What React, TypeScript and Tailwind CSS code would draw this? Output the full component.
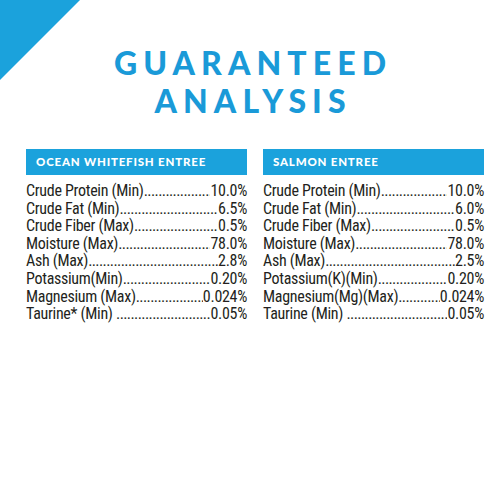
import React from "react";

const left: [string, string][] = [
  ["Crude Protein (Min)", "10.0%"],
  ["Crude Fat (Min)", "6.5%"],
  ["Crude Fiber (Max)", "0.5%"],
  ["Moisture (Max)", "78.0%"],
  ["Ash (Max)", "2.8%"],
  ["Potassium(Min)", "0.20%"],
  ["Magnesium (Max)", "0.024%"],
  ["Taurine* (Min) ", "0.05%"],
];
const right: [string, string][] = [
  ["Crude Protein (Min)", "10.0%"],
  ["Crude Fat (Min)", "6.0%"],
  ["Crude Fiber (Max)", "0.5%"],
  ["Moisture (Max)", "78.0%"],
  ["Ash (Max)", "2.5%"],
  ["Potassium(K)(Min)", "0.20%"],
  ["Magnesium(Mg)(Max)", "0.024%"],
  ["Taurine (Min) ", "0.05%"],
];

const DOTS = ".".repeat(120);

function Column({ title, rows }: { title: string; rows: [string, string][] }) {
  return (
    <div className="w-[221px] flex flex-col">
      <div className="h-[26px] bg-[#1ba2dc] flex items-center pl-[10px]">
        <span
          className="text-white text-[11.5px] font-black tracking-[0.07em]"
          style={{ fontFamily: "Lato, 'Open Sans', sans-serif" }}
        >
          {title}
        </span>
      </div>
      <div
        className="mt-[7px] flex flex-col text-[#231f20] text-[16px] leading-[17.6px] tracking-[-0.3px]"
        style={{ fontFamily: "'Roboto Condensed', 'Liberation Sans', sans-serif" }}
      >
        {rows.map(([k, v], i) => (
          <div key={i} className="flex whitespace-pre">
            <span className="shrink-0">{k}</span>
            <span className="flex-1 overflow-hidden text-clip tracking-[-0.6px]">{DOTS}</span>
            <span className="shrink-0">{v}</span>
          </div>
        ))}
      </div>
    </div>
  );
}

export default function App() {
  return (
    <div className="w-[500px] h-[500px] bg-white relative overflow-hidden">
      <svg className="absolute left-0 top-0" width="80" height="80" viewBox="0 0 80 80">
        <polygon points="0,0 80,0 0,80" fill="#1ba2dc" />
      </svg>
      <div className="pt-[44px] flex flex-col items-center">
        <div
          className="text-[#1a9ad8] text-[32px] leading-[38px] font-black tracking-[0.19em] pl-[0.19em] text-center"
          style={{ fontFamily: "Lato, 'Open Sans', sans-serif" }}
        >
          <div>GUARANTEED</div>
          <div>ANALYSIS</div>
        </div>
      </div>
      <div className="mt-[29px] flex gap-[16px] pl-[26px]">
        <Column title="OCEAN WHITEFISH ENTREE" rows={left} />
        <Column title="SALMON ENTREE" rows={right} />
      </div>
    </div>
  );
}
